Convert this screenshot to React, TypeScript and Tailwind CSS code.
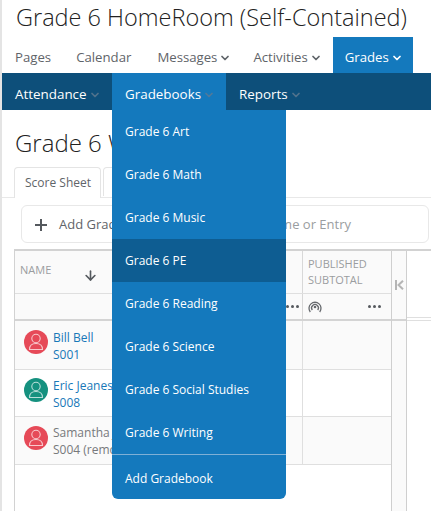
import { ChevronDown, ArrowDown } from "lucide-react";

const font = { fontFamily: '"Open Sans", sans-serif' };

function Caret({ className }: { className: string }) {
  return <ChevronDown size={12} strokeWidth={3.5} className={`-mr-[3px] ${className}`} />;
}

function NavItem({ label, caret, className = "" }: { label: string; caret?: boolean; className?: string }) {
  return (
    <div className={`flex h-full items-center gap-[2px] px-3 pt-[6px] text-[13.2px] text-[#5f6469] ${className}`}>
      {label}
      {caret && <Caret className="text-[#5f6469]" />}
    </div>
  );
}

function Dots() {
  return (
    <span className="flex gap-[2px]">
      <i className="h-[3px] w-[3px] rounded-full bg-[#55595e]" />
      <i className="h-[3px] w-[3px] rounded-full bg-[#55595e]" />
      <i className="h-[3px] w-[3px] rounded-full bg-[#55595e]" />
    </span>
  );
}

function Student({
  name,
  id,
  color,
  rowClass,
  removed,
}: {
  name: string;
  id: string;
  color: string;
  rowClass: string;
  removed?: boolean;
}) {
  return (
    <div className={`grid grid-cols-[288px_88px] border-b-[1.5px] border-[#dfdfdf] ${rowClass}`}>
      <div className="flex items-center gap-[5px] overflow-hidden border-r-[1.5px] border-[#dfdfdf] pl-[9px]">
        <div className={`mb-[6px] flex h-6 w-6 shrink-0 items-center justify-center rounded-full ${color}`}>
          <svg width="24" height="24" viewBox="0 0 24 24" fill="none" stroke="#ffffff" strokeOpacity="0.7" strokeWidth="1.1">
            <circle cx="12" cy="8.5" r="4.2" />
            <path d="M5.5 19.5C5.5 15.5 8 13.5 12 13.5S18.5 15.5 18.5 19.5Z" />
          </svg>
        </div>
        <div className={`whitespace-nowrap pt-px text-xs leading-[17px] ${removed ? "text-[#77797c]" : "text-[#1878b8]"}`}>
          <div>{name}</div>
          <div>{id}</div>
        </div>
      </div>
      <div />
    </div>
  );
}

const gradebooks = ["Art", "Math", "Music", "PE", "Reading", "Science", "Social Studies", "Writing"];

export default function App() {
  return (
    <div className="relative h-[511px] w-[431px] overflow-hidden border-l-2 border-[#e4e4e4] bg-white text-[#2d2d2d]" style={font}>
      <h1 className="h-[37px] whitespace-nowrap pl-[14px] text-[23.5px] font-light leading-[34px] text-[#222]">
        Grade 6 HomeRoom (Self-Contained)
      </h1>

      <nav className="flex h-[36px] gap-px pl-px">
        <NavItem label="Pages" />
        <NavItem label="Calendar" />
        <NavItem label="Messages" caret className="ml-px" />
        <NavItem label="Activities" caret />
        <div className="ml-px flex h-full w-[80px] items-center gap-[2px] bg-[#1479bd] px-3 pt-[6px] text-[13.2px] text-white">
          Grades
          <Caret className="text-white" />
        </div>
      </nav>

      <div className="flex h-[37px] bg-[#0d4f7a] text-[13.4px] text-white">
        <div className="flex w-[110px] items-center gap-[2px] pl-[13px] pt-[6px]">
          Attendance
          <Caret className="text-[#50728c]" />
        </div>
        <div className="flex w-[114px] items-center gap-[2px] bg-[#1479bd] pl-[13px] pt-[6px]">
          Gradebooks
          <Caret className="text-[#50799a]" />
        </div>
        <div className="flex items-center gap-[2px] pl-[13px] pt-[6px]">
          Reports
          <Caret className="text-[#50728c]" />
        </div>
      </div>

      <h2 className="mt-[17px] h-[40px] whitespace-nowrap pl-[13px] text-2xl font-light leading-[32px] text-[#222]">
        Grade 6 Weights
      </h2>

      <div className="flex h-[31px] border-b-[1.5px] border-[#e8e8e8] pl-[12px]">
        <div className="h-[31px] w-[87px] rounded-t border-[1.5px] border-b-0 border-[#e4e4e4] bg-white pl-[10px] pt-[7px] text-xs text-[#5f6469]">
          Score Sheet
        </div>
        <div className="ml-[2px] h-[29px] w-[40px] rounded-t border-[1.5px] border-b-0 border-[#e4e4e4]" />
      </div>

      <div className="ml-[19px] mr-[2px] mt-[7px] flex h-[38px] items-center rounded-md border-[1.5px] border-[#e8e8e8] pt-px text-[13px] text-[#5f6469]">
        <svg width="12" height="12" viewBox="0 0 12 12" className="ml-[13px]">
          <path d="M6 0V12M0 6H12" stroke="#55595e" strokeWidth="2" />
        </svg>
        <span className="ml-[12px] whitespace-nowrap">Add Grade Item</span>
        <span className="ml-auto mr-[77px] whitespace-nowrap text-[#9a9da0]">Filter by Name or Entry</span>
      </div>

      <div className="ml-[12px] mt-[6px] flex h-[262px] border-l-[1.5px] border-t-2 border-[#d2d2d2]">
        <div className="w-[376px] shrink-0">
          <div className="grid h-[43px] grid-cols-[288px_88px] border-b-[1.5px] border-[#dfdfdf] bg-[#fafafa]">
            <div className="flex items-start border-r-[1.5px] border-[#d8d8d8]">
              <span className="pl-[5px] pt-[11px] text-[11px] text-[#9a9da0]">NAME</span>
              <ArrowDown size={15} strokeWidth={2.6} className="ml-[32px] mt-[17px] text-[#55595e]" />
            </div>
            <div className="pl-[5px] pt-[5px] text-[11px] leading-4 text-[#9a9da0]">
              PUBLISHED
              <br />
              SUBTOTAL
            </div>
          </div>
          <div className="grid h-[25px] grid-cols-[288px_88px] bg-[#fafafa]">
            <div className="flex items-center justify-end border-r-[1.5px] border-[#d8d8d8] pr-[3px]">
              <Dots />
            </div>
            <div className="flex items-center justify-between pl-[5px] pr-[10px]">
              <svg width="14" height="14" viewBox="0 0 14 14" fill="none" stroke="#66696d" strokeWidth="1.3">
                <path d="M2.3 12A6 6 0 1 1 11.7 12" />
                <path d="M4.3 10A3.4 3.4 0 1 1 9.7 10" />
                <circle cx="7" cy="7" r="1.3" fill="#66696d" stroke="none" />
              </svg>
              <Dots />
            </div>
          </div>
          <div className="h-[2px] bg-[#d4d4d4]" />
          <Student name="Bill Bell" id="S001" color="bg-[#e64a58]" rowClass="h-[49px] bg-[#fafafa]" />
          <Student name="Eric Jeanes" id="S008" color="bg-[#15917f]" rowClass="h-[47px] bg-white" />
          <Student name="Samantha Jones" id="S004 (removed)" color="bg-[#e64a58]" rowClass="h-[48px] bg-[#fafafa]" removed />
        </div>

        <div className="flex w-[16px] shrink-0 flex-col border-x-[1.5px] border-[#cfcfcf] bg-[#fafafa]">
          <div className="flex h-[68px] items-center justify-center">
            <svg width="9" height="10" viewBox="0 0 9 10" fill="none" stroke="#b5b5b5" strokeWidth="2">
              <path d="M1 0V10M8 0.7L3.5 5L8 9.3" />
            </svg>
          </div>
          <div className="h-[2px] bg-[#d4d4d4]" />
        </div>

        <div className="flex-1">
          <div className="h-[66px]" />
          <div className="h-[4px] border-y-[1.5px] border-[#dfdfdf]" />
        </div>
      </div>

      <div className="absolute left-[110px] top-[110px] w-[174px] rounded-b-md bg-[#1479bd] text-xs text-white">
        {gradebooks.map((g) => (
          <div key={g} className={`flex h-[43px] items-center px-[13px] pt-px ${g === "PE" ? "bg-[#0e5d92]" : ""}`}>
            Grade 6 {g}
          </div>
        ))}
        <div className="flex h-[45px] items-center border-t border-[#7fb0d6] px-[13px] pt-[3px]">Add Gradebook</div>
      </div>
    </div>
  );
}
